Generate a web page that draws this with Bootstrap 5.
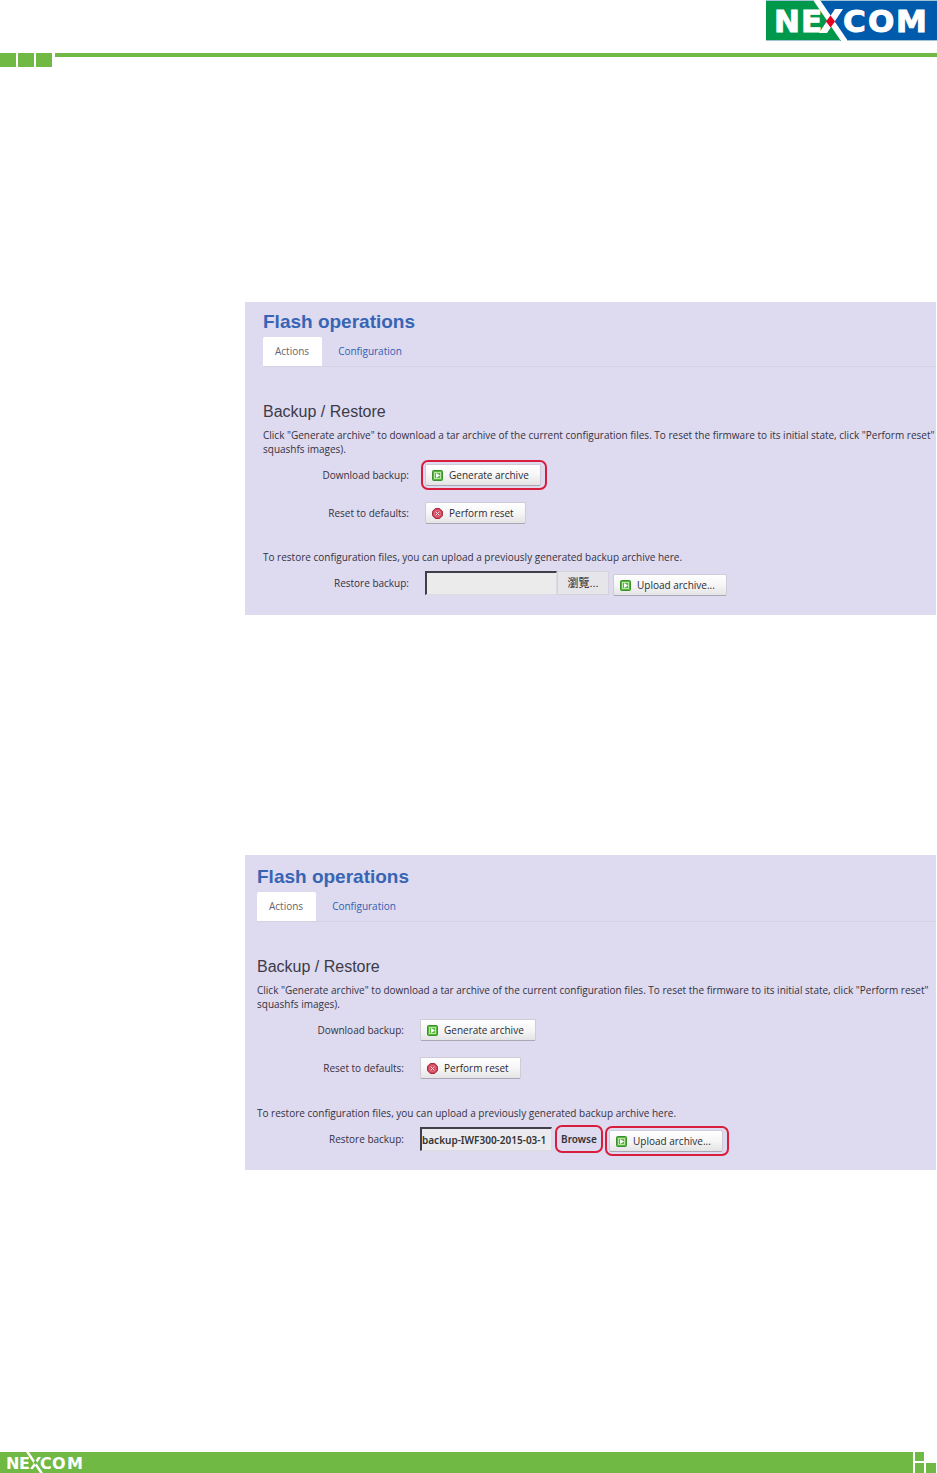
<!DOCTYPE html>
<html lang="en">
<head>
<meta charset="utf-8">
<meta name="viewport" content="width=device-width, initial-scale=1">
<title>Flash operations</title>
<link rel="stylesheet" href="https://cdn.jsdelivr.net/npm/bootstrap@5.3.0/dist/css/bootstrap.min.css">
<style>
  :root { --brand-green: #70b944; --panel: #dedaef; --ring: #d81e3c; }
  body { font-family: "Open Sans", Arial, sans-serif; font-size: 10px; line-height: 14px; color: #35323f; background: #fff; }
  .page-head { height: 67px; }
  .brand-logo { width: 171px; height: 41px; }
  .head-rule { height: 14px; }
  .head-tiles { gap: 2px; }
  .head-tiles i { width: 16px; background: var(--brand-green); }
  .head-line { height: 4px; background: var(--brand-green); margin-left: 3px; }
  .page-body { padding: 235px 1px 0 245px; }
  .flash-panel { background: var(--panel); padding: 8px 0 21px 18px; white-space: nowrap; overflow: hidden; margin-bottom: 240px; }
  .flash-panel.is-second { padding: 10px 0 20px 12px; margin-bottom: 0; }
  .flash-panel h1 { font-family: "Liberation Sans", Arial, sans-serif; font-size: 19px; line-height: 24px; font-weight: 700; color: #3765b4; margin: 0 0 3px; }
  .flash-tabs { border-bottom: 1px solid #d6d2e4; margin-bottom: 34px; }
  .flash-tabs .nav-link { padding: 7px 13px 8px 12px; line-height: 14px; border: 0; border-radius: 2px 2px 0 0; color: #2f5fb4; }
  .flash-tabs .nav-item + .nav-item { margin-left: 4px; }
  .flash-tabs .nav-link.active { background: #fff; color: #66656e; margin-bottom: -1px; }
  .flash-panel h2 { font-family: "Liberation Sans", Arial, sans-serif; font-size: 16px; line-height: 22px; color: #3c3a48; font-weight: 400; margin: 0 0 5px; }
  .flash-panel p { margin: 0; }
  .flash-panel .restore-note { margin-top: 18px; padding-top: 8px; }
  .is-second .restore-note { padding-top: 9px; }
  .form-line { height: 22px; }
  .form-line label, .form-line .line-label { width: 146px; text-align: right; margin-right: 16px; flex: none; }
  .tool-btn { height: 22px; padding: 0 11px 0 6px; font: inherit; line-height: 18px; color: #2c2b33; border: 1px solid #cfccd8; border-bottom-color: #aaa7b4; border-radius: 2px; background: linear-gradient(#fff, #f6f6f6 50%, #e4e4e6); display: inline-flex; align-items: center; gap: 6px; }
  .tool-btn svg { width: 11px; height: 11px; flex: none; }
  .ringed { position: relative; display: inline-flex; }
  .ringed::after { content: ""; position: absolute; inset: -4px -6px -4px -4px; border: 2px solid var(--ring); border-radius: 7px; pointer-events: none; }
  .file-path { width: 132px; height: 24px; padding: 0; border: 1px solid #dcdce0; border-top: 2px solid #403e48; border-left: 2px solid #403e48; background: #ebebeb; border-radius: 0; font-family: "Noto Sans", sans-serif; font-size: 10px; font-weight: 600; color: #333; }
  .file-btn { width: 52px; height: 24px; padding: 0; border: 1px solid #d5d2dc; background: #e6e5ea; color: #222; font-family: "Liberation Sans", "Noto Sans CJK TC", sans-serif; font-size: 11px; }
  .is-second .line-label, .is-second label { width: 147px; }
  .is-second .file-path { background: #ebeaee; }
  .is-second .file-btn { width: 44px; background: transparent; border: 0; font-family: "Noto Sans", sans-serif; font-size: 10px; font-weight: 600; color: #333; }
  .is-second .file-ring { margin-left: 5px; }
  .is-second .file-ring::after { inset: -2px; }
  .page-foot { height: 21px; }
  .foot-bar { background: var(--brand-green); padding-left: 7px; }
  .foot-bar svg { width: 78px; height: 21px; display: block; }
  .foot-tiles { display: grid; grid-template-columns: 9px 10px; grid-template-rows: 9px 10px; gap: 2px; margin: 0 1px 0 2px; }
  .foot-tiles i { background: var(--brand-green); grid-row: 2; }
  .foot-tiles i:first-child { grid-area: 1 / 1; }
</style>
</head>
<body class="min-vh-100 d-flex flex-column">

<svg class="d-none" xmlns="http://www.w3.org/2000/svg">
  <symbol id="ico-go" viewBox="0 0 11 11">
    <rect x=".5" y=".5" width="10" height="10" rx="1" fill="#58b53e" stroke="#39902c"/>
    <rect x="2.5" y="2.5" width="6" height="6" fill="none" stroke="#b7e6a5"/>
    <path d="M4 3v5l4-2.500z" fill="#fff"/>
  </symbol>
  <symbol id="ico-stop" viewBox="0 0 11 11">
    <path d="M3.300.5h4.400l2.800 2.800v4.400l-2.800 2.800H3.300L.5 7.700V3.300z" fill="#cf4258" stroke="#a92f43"/>
    <circle cx="5.500" cy="5.500" r="3" fill="none" stroke="#e9929d" stroke-width=".7"/>
    <path d="M3.800 3.800l3.400 3.400M7.200 3.800L3.800 7.200" stroke="#fbe3e6" stroke-width="1"/>
  </symbol>
</svg>

<header class="page-head d-flex flex-column justify-content-between">
  <svg class="brand-logo ms-auto" viewBox="0 0 171 41" role="img" aria-label="NEXCOM">
    <rect width="171" height="41" fill="#00984a"/>
    <path d="M51 0H171V41H80z" fill="#005bac"/>
    <path d="M47 0H54L82 41H75z" fill="#fff"/>
    <path d="M69 9H77L61 33H53z" fill="#fff"/>
    <g fill="#fff" stroke="#fff" font-family="DejaVu Sans" font-weight="700" font-size="31">
      <text x="8" y="32">N</text><text x="35" y="32">E</text><text x="77" y="32">C</text><text x="102" y="32">O</text><text x="130" y="32">M</text>
    </g>
    <path d="M64.500 15.500L69 21.500L64.500 27.500L60 21.500z" fill="#e60021"/>
    <path d="M0 .5H47M54 .5H171M0 40.500H74M82 40.500H171" stroke="#9fc4d4"/>
  </svg>
  <div class="head-rule d-flex">
    <div class="head-tiles d-flex"><i></i><i></i><i></i></div>
    <div class="head-line flex-grow-1"></div>
  </div>
</header>

<main class="page-body flex-grow-1">
  <section class="flash-panel">
    <h1>Flash operations</h1>
    <ul class="nav flash-tabs">
      <li class="nav-item"><a class="nav-link active" href="#actions">Actions</a></li>
      <li class="nav-item"><a class="nav-link" href="#configuration">Configuration</a></li>
    </ul>
    <h2>Backup / Restore</h2>
    <p>Click "Generate archive" to download a tar archive of the current configuration files. To reset the firmware to its initial state, click "Perform reset"<br>squashfs images).</p>
    <div class="form-line d-flex align-items-center mt-2">
      <span class="line-label">Download backup:</span>
      <span class="ringed"><button type="button" class="tool-btn"><svg><use href="#ico-go"/></svg>Generate archive</button></span>
    </div>
    <div class="form-line d-flex align-items-center mt-3">
      <span class="line-label">Reset to defaults:</span>
      <button type="button" class="tool-btn"><svg><use href="#ico-stop"/></svg>Perform reset</button>
    </div>
    <p class="restore-note">To restore configuration files, you can upload a previously generated backup archive here.</p>
    <form class="form-line d-flex align-items-center mt-2">
      <label for="file1">Restore backup:</label>
      <input id="file1" class="file-path" type="text" readonly>
      <button type="button" class="file-btn">瀏覽...</button>
      <button type="button" class="tool-btn ms-1 mt-1"><svg><use href="#ico-go"/></svg>Upload archive...</button>
    </form>
  </section>

  <section class="flash-panel is-second">
    <h1>Flash operations</h1>
    <ul class="nav flash-tabs">
      <li class="nav-item"><a class="nav-link active" href="#actions">Actions</a></li>
      <li class="nav-item"><a class="nav-link" href="#configuration">Configuration</a></li>
    </ul>
    <h2>Backup / Restore</h2>
    <p>Click "Generate archive" to download a tar archive of the current configuration files. To reset the firmware to its initial state, click "Perform reset"<br>squashfs images).</p>
    <div class="form-line d-flex align-items-center mt-2">
      <span class="line-label">Download backup:</span>
      <button type="button" class="tool-btn"><svg><use href="#ico-go"/></svg>Generate archive</button>
    </div>
    <div class="form-line d-flex align-items-center mt-3">
      <span class="line-label">Reset to defaults:</span>
      <button type="button" class="tool-btn"><svg><use href="#ico-stop"/></svg>Perform reset</button>
    </div>
    <p class="restore-note">To restore configuration files, you can upload a previously generated backup archive here.</p>
    <form class="form-line d-flex align-items-center mt-2">
      <label for="file2">Restore backup:</label>
      <input id="file2" class="file-path" type="text" readonly value="backup-IWF300-2015-03-1">
      <span class="ringed file-ring"><button type="button" class="file-btn">Browse</button></span>
      <span class="ringed ms-2 mt-1"><button type="button" class="tool-btn"><svg><use href="#ico-go"/></svg>Upload archive...</button></span>
    </form>
  </section>
</main>

<footer class="page-foot d-flex">
  <div class="foot-bar flex-grow-1">
    <svg viewBox="0 0 78 21" role="img" aria-label="NEXCOM">
      <g fill="#fff" font-family="DejaVu Sans" font-weight="700" font-size="16">
        <text x="-1" y="17">N</text><text x="12" y="17">E</text><text x="33" y="17">C</text><text x="45" y="17">O</text><text x="60" y="17">M</text>
      </g>
      <path d="M19 0H22L36 21H33zM31 5H34L26 17H23z" fill="#fff"/>
      <path d="M28.500 8L30.500 10.500L28.500 13L26.500 10.500z" fill="#70b944"/>
    </svg>
  </div>
  <div class="foot-tiles"><i></i><i></i><i></i></div>
</footer>
<script src="https://cdn.jsdelivr.net/npm/bootstrap@5.3.0/dist/js/bootstrap.bundle.min.js"></script>
</body>
</html>
